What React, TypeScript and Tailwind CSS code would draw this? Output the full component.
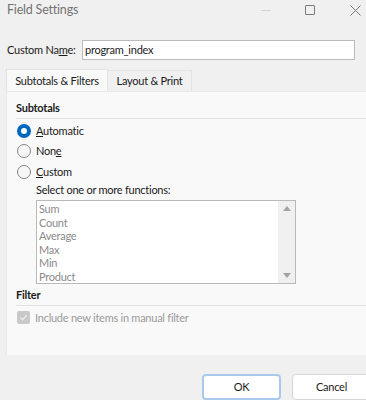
import React from "react";

const functions = ["Sum", "Count", "Average", "Max", "Min", "Product"];

function Radio({ checked, label }: { checked?: boolean; label: React.ReactNode }) {
  return (
    <div className="flex h-[20.5px] items-center gap-[5px]">
      {checked ? (
        <span className="flex h-[14px] w-[14px] items-center justify-center rounded-full bg-[#0067c0]">
          <span className="h-[6px] w-[6px] rounded-full bg-white" />
        </span>
      ) : (
        <span className="h-[14px] w-[14px] rounded-full border border-[#858585] bg-[#f6f6f6]" />
      )}
      <span className="text-[#1b1b1b]">{label}</span>
    </div>
  );
}

export default function App() {
  return (
    <div
      className="flex h-[400px] w-[366px] flex-col overflow-hidden whitespace-nowrap bg-[#f0f0f0] text-[11px] leading-[14px] tracking-[-0.25px] text-[#1b1b1b]"
      style={{ fontFamily: 'Lato, "Noto Sans", sans-serif' }}
    >
      {/* title bar */}
      <div className="flex h-[21px] items-center pl-[7px]">
        <span className="text-[12.5px] tracking-[-0.2px] text-[#737373]">Field Settings</span>
        <div className="ml-auto flex items-center">
          <span className="mr-[34px] h-px w-[10px] bg-[#d4d4d4]" />
          <span className="mr-[35px] h-[10px] w-[10px] rounded-[1px] border border-[#7a7a7a]" />
          <svg width="11" height="11" viewBox="0 0 11 11" className="mr-[5px]">
            <path d="M0.5 0.5 L10.5 10.5 M10.5 0.5 L0.5 10.5" stroke="#7a7a7a" strokeWidth="1" />
          </svg>
        </div>
      </div>

      {/* custom name */}
      <div className="mt-[19px] flex h-[20px] items-center pl-[7px]">
        <span className="w-[75px]">
          Custom Na<span className="underline">m</span>e:
        </span>
        <div className="flex h-[20px] w-[273px] items-center border border-[#bcbcbc] bg-white px-[2px]">
          program_index
        </div>
      </div>

      {/* tabs */}
      <div className="mt-[9px] flex h-[23px] pl-[6px]">
        <div className="flex w-[102px] items-center justify-center border-x border-t border-[#e3e3e3] bg-[#f9f9f9]">
          Subtotals &amp; Filters
        </div>
        <div className="mt-px flex w-[84px] items-center justify-center border-r border-t border-[#e3e3e3] bg-[#f0f0f0]">
          Layout &amp; Print
        </div>
      </div>

      {/* panel */}
      <div className="ml-[6px] flex h-[267px] flex-col border-l border-t border-[#e8e8e8] bg-[#f9f9f9] pl-[9px]">
        <div className="mt-[9px] font-bold">Subtotals</div>
        <div className="mt-[3px] h-px bg-[#e3e3e3]" />
        <div className="mt-px flex flex-col pl-[1px]">
          <Radio checked label={<><span className="underline">A</span>utomatic</>} />
          <Radio label={<>Non<span className="underline">e</span></>} />
          <Radio label={<><span className="underline">C</span>ustom</>} />
        </div>
        <div className="ml-[20px] mt-px">Select one or more functions:</div>
        <div className="ml-[20px] mt-[3px] flex h-[84px] w-[260px] border border-[#b9b9b9] bg-white">
          <div className="flex flex-1 flex-col pl-[2px] pt-px leading-[13.6px] text-[#8a8a8a]">
            {functions.map((f) => (
              <span key={f}>{f}</span>
            ))}
          </div>
          <div className="flex w-[17px] flex-col items-center justify-between bg-[#f0f0f0] py-[5px]">
            <svg width="8" height="5" viewBox="0 0 8 5">
              <path d="M4 0 L8 5 L0 5 Z" fill="#a3a3a3" />
            </svg>
            <svg width="8" height="5" viewBox="0 0 8 5">
              <path d="M0 0 L8 0 L4 5 Z" fill="#a3a3a3" />
            </svg>
          </div>
        </div>
        <div className="mt-[4px] font-bold">Filter</div>
        <div className="mt-[3px] h-px bg-[#e3e3e3]" />
        <div className="mt-[5px] flex items-center gap-[5px] pl-[1px]">
          <span className="flex h-[13px] w-[13px] items-center justify-center rounded-[2px] bg-[#c9c9c9]">
            <svg width="9" height="9" viewBox="0 0 9 9">
              <path d="M1.5 4.7 L3.6 6.8 L7.6 2.2" stroke="#eeeeee" strokeWidth="1.3" fill="none" />
            </svg>
          </span>
          <span className="text-[#9a9a9a]">Include new items in manual filter</span>
        </div>
      </div>

      {/* buttons */}
      <div className="mt-[19px] flex gap-[11px] pl-[202px]">
        <button className="h-[26px] w-[79px] shrink-0 rounded-[4px] border-2 border-[#a9c9ec] bg-white">OK</button>
        <button className="h-[26px] w-[79px] shrink-0 rounded-[4px] border border-[#d6d6d6] bg-white">Cancel</button>
      </div>
    </div>
  );
}
